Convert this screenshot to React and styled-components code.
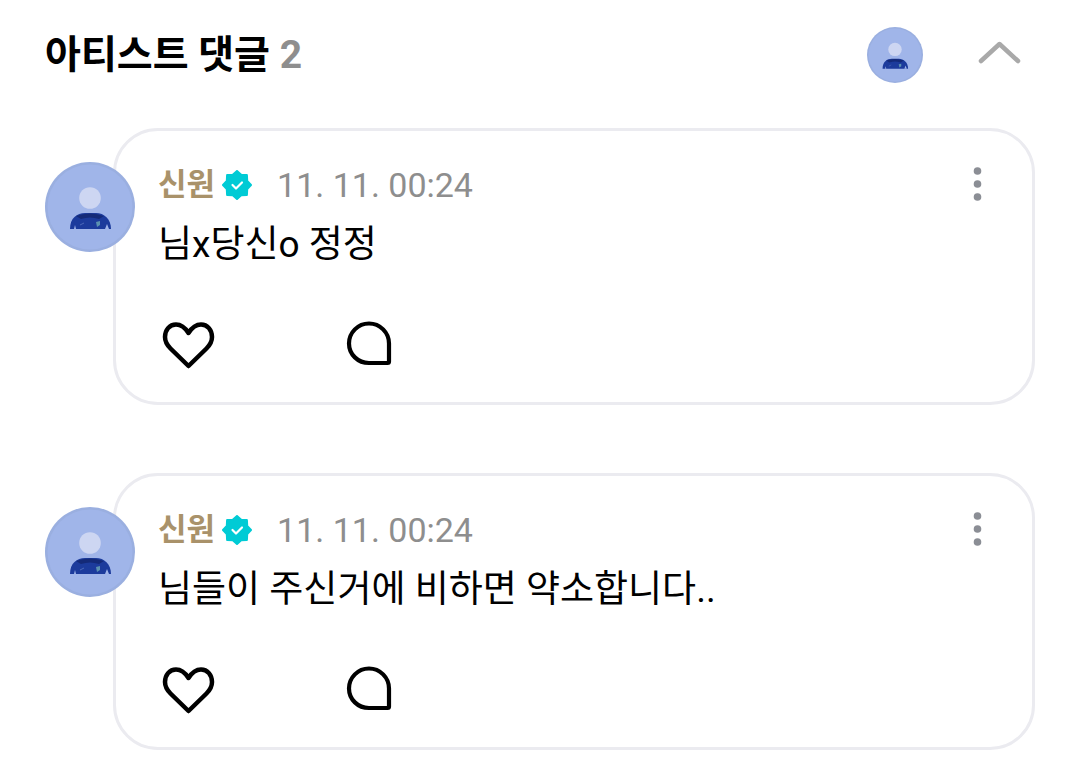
import React, { useState } from "react";
import styled, { createGlobalStyle } from "styled-components";

const GlobalStyle = createGlobalStyle`
  * {
    box-sizing: border-box;
  }

  body {
    margin: 0;
    background-color: #fff;
    color: #000;
    font-family: Roboto, "Noto Sans CJK KR", sans-serif;
  }
`;

const Section = styled.section`
  padding: 25px 45px 24px;
`;

const Header = styled.header`
  display: flex;
  align-items: center;
  height: 60px;
  margin-bottom: 43px;
`;

const Title = styled.h1`
  flex: 1;
  margin: 0;
  font-size: 39px;
  line-height: 60px;
  font-weight: 700;
`;

const Count = styled.span`
  color: #8e8e8e;
`;

const IconButton = styled.button`
  display: flex;
  padding: 0;
  border: none;
  background: none;
  color: ${(props) => props.$color || "#000"};
  cursor: pointer;
`;

const ToggleButton = styled(IconButton)`
  margin: 0 14px 4px 54px;
`;

const AvatarSvg = styled.svg`
  position: relative;
  flex-shrink: 0;
  width: ${(props) => props.$size}px;
  height: ${(props) => props.$size}px;
`;

const CommentList = styled.ul`
  display: flex;
  flex-direction: column;
  gap: 68px;
  margin: 0;
  padding: 0;
  list-style: none;
`;

const CommentItem = styled.li`
  display: flex;
  align-items: flex-start;

  > svg {
    margin-top: 34px;
  }
`;

const Card = styled.article`
  flex: 1;
  min-width: 0;
  margin-left: -22px;
  padding: 34px 42px 30px;
  border: 3px solid #ebebf0;
  border-radius: 45px;
`;

const CardHeader = styled.div`
  display: flex;
  align-items: center;
  height: 40px;
`;

const Author = styled.strong`
  margin-right: 7px;
  color: #a9926a;
  font-size: 31px;
  line-height: 40px;
  font-weight: 700;
`;

const PostedAt = styled.time`
  flex: 1;
  margin-left: 25px;
  color: #8e8e8e;
  font-size: 34px;
  line-height: 40px;
`;

const Message = styled.p`
  margin: 12px 0 45px;
  font-size: 37px;
  line-height: 56px;
`;

const Actions = styled.div`
  display: flex;
  align-items: center;
  gap: 127px;
`;

const Avatar = ({ size }) => (
  <AvatarSvg $size={size} viewBox="0 0 90 90" role="img" aria-label="신원">
    <circle cx="45" cy="45" r="45" fill="#9aafe0" />
    <circle cx="45" cy="45" r="42.5" fill="#a0b5e9" />
    <circle cx="45" cy="36" r="10.8" fill="#cdd6f2" />
    <path
      d="M25 67C25 56 32 51 40 51H51C59 51 66 57 66 67Z"
      fill="#1c3b9c"
    />
    <path d="M31 54Q45 49 59 54L54 57Q45 54 36 57Z" fill="#142a78" />
    <path d="M29 67L30 63L31 67ZM60 67L62 62L64 67Z" fill="#a0b5e9" />
    <path d="M51 60L55 59V63L52 65Z" fill="#5b91b0" />
    <path d="M35 63L39 61" stroke="#4d69b8" />
  </AvatarSvg>
);

const ChevronUp = () => (
  <svg width="44" height="28" viewBox="0 0 44 28" fill="none">
    <path
      d="M4 22L22.5 5L41 22"
      stroke="currentColor"
      strokeWidth="4.5"
      strokeLinecap="round"
      strokeLinejoin="round"
    />
  </svg>
);

const VerifiedBadge = () => (
  <svg width="30" height="30" viewBox="0 0 30 30" role="img" aria-label="인증됨">
    <path
      d="M15 1L19.2 4.8L24.9 5.1L25.2 10.8L29 15L25.2 19.2L24.9 24.9L19.2 25.2L15 29L10.8 25.2L5.1 24.9L4.8 19.2L1 15L4.8 10.8L5.1 5.1L10.8 4.8Z"
      fill="#00cbd5"
      stroke="#00cbd5"
      strokeWidth="2"
      strokeLinejoin="round"
    />
    <path
      d="M10.5 15L14 18.5L20 12.5"
      fill="none"
      stroke="#fff"
      strokeWidth="2.2"
      strokeLinecap="round"
      strokeLinejoin="round"
    />
  </svg>
);

const MoreIcon = () => (
  <svg width="24" height="36" viewBox="0 0 24 36" fill="currentColor">
    <circle cx="11.5" cy="4" r="3.8" />
    <circle cx="11.5" cy="17" r="3.8" />
    <circle cx="11.5" cy="30" r="3.8" />
  </svg>
);

const HeartIcon = () => (
  <svg width="58" height="54" viewBox="0 0 58 54" fill="none">
    <path
      d="M30.5 15C27 9.5 23 6.5 18 6.5C11.5 6.5 7 12 7 19C7 23.5 9 27 12.5 30.5L30.5 48L48.5 30.5C52 27 54 23.5 54 19C54 12 49.5 6.5 43 6.5C38 6.5 34 9.5 30.5 15Z"
      stroke="currentColor"
      strokeWidth="4.5"
      strokeLinejoin="round"
    />
  </svg>
);

const ReplyIcon = () => (
  <svg width="54" height="54" viewBox="0 0 54 54" fill="none">
    <path
      d="M26 5.5C37 5.5 46 14.5 46 25.5V43.5Q46 45 44.5 45H26C15 45 6 36.5 6 25.5C6 14.5 15 5.5 26 5.5Z"
      stroke="currentColor"
      strokeWidth="4.2"
      strokeLinejoin="round"
    />
  </svg>
);

const comments = [
  { id: 1, author: "신원", time: "11. 11. 00:24", text: "님x당신o 정정" },
  {
    id: 2,
    author: "신원",
    time: "11. 11. 00:24",
    text: "님들이 주신거에 비하면 약소합니다..",
  },
];

const Comment = ({ comment }) => (
  <CommentItem>
    <Avatar size={90} />
    <Card>
      <CardHeader>
        <Author>{comment.author}</Author>
        <VerifiedBadge />
        <PostedAt>{comment.time}</PostedAt>
        <IconButton type="button" aria-label="더보기" $color="#8b8e95">
          <MoreIcon />
        </IconButton>
      </CardHeader>
      <Message>{comment.text}</Message>
      <Actions>
        <IconButton type="button" aria-label="좋아요">
          <HeartIcon />
        </IconButton>
        <IconButton type="button" aria-label="답글">
          <ReplyIcon />
        </IconButton>
      </Actions>
    </Card>
  </CommentItem>
);

const App = () => {
  const [open, setOpen] = useState(true);

  return (
    <Section>
      <GlobalStyle />
      <Header>
        <Title>
          아티스트 댓글 <Count>{comments.length}</Count>
        </Title>
        <Avatar size={56} />
        <ToggleButton
          type="button"
          aria-label="댓글 접기"
          aria-expanded={open}
          $color="#a9a9a9"
          onClick={() => setOpen(!open)}
        >
          <ChevronUp />
        </ToggleButton>
      </Header>
      {open && (
        <CommentList>
          {comments.map((comment) => (
            <Comment key={comment.id} comment={comment} />
          ))}
        </CommentList>
      )}
    </Section>
  );
};

export default App;
